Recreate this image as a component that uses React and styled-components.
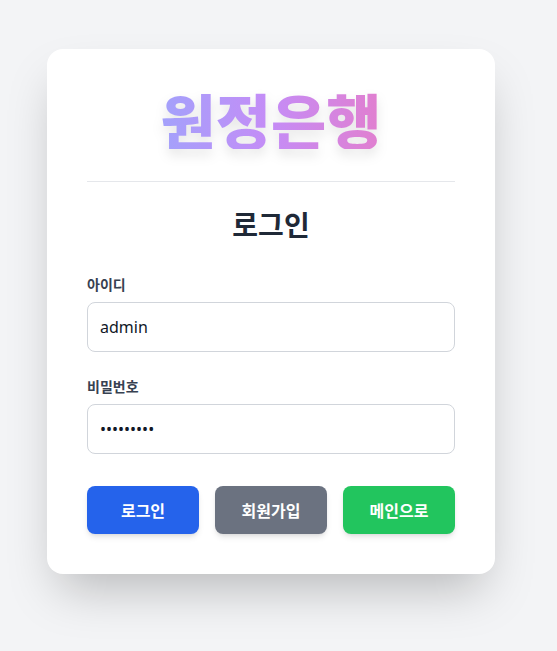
import React from "react";
import styled, { createGlobalStyle } from "styled-components";

const Global = createGlobalStyle`
  html, body { margin: 0; padding: 0; }
  body {
    background: #f3f4f6;
    font-family: "Noto Sans CJK KR", "Noto Sans", sans-serif;
  }
  * { box-sizing: border-box; }
`;

const Page = styled.div`
  min-height: 651px;
  display: flex;
  justify-content: center;
  align-items: flex-start;
  padding: 49px 15px 0 0;
`;

const Card = styled.div`
  width: 448px;
  background: #ffffff;
  border-radius: 16px;
  padding: 40px;
  box-shadow: 0 25px 50px -12px rgba(0, 0, 0, 0.25);
`;

const Brand = styled.div`
  padding-bottom: 31px;
  border-bottom: 1px solid #e5e7eb;
  text-align: center;
`;

const BrandText = styled.h1`
  margin: 0;
  font-size: 60px;
  line-height: 1;
  font-weight: 900;
  background: linear-gradient(90deg, #a3a1fb, #c58cf6 50%, #e17fcf);
  -webkit-background-clip: text;
  background-clip: text;
  color: transparent;
  display: inline-block;
  filter: drop-shadow(0 6px 6px rgba(0, 0, 0, 0.1));
`;

const Heading = styled.h2`
  margin: 24px 0 32px;
  text-align: center;
  font-size: 28px;
  line-height: 36px;
  font-weight: 700;
  color: #1f2937;
`;

const Field = styled.div`
  display: flex;
  flex-direction: column;
  gap: 8px;
  margin-bottom: ${(p) => (p.$last ? "32px" : "24px")};
`;

const Label = styled.label`
  font-size: 14px;
  line-height: 20px;
  font-weight: 700;
  color: #374151;
`;

const Input = styled.input`
  width: 100%;
  height: 50px;
  padding: 12px;
  border: 1px solid #d1d5db;
  border-radius: 8px;
  font-family: "Noto Sans", "Noto Sans CJK KR", sans-serif;
  font-size: 16px;
  color: #111827;
  outline: none;
  background: #fff;
`;

const Buttons = styled.div`
  display: grid;
  grid-template-columns: repeat(3, 1fr);
  gap: 16px;
`;

const Button = styled.button`
  height: 48px;
  border: none;
  border-radius: 8px;
  background: ${(p) => p.$bg};
  color: #ffffff;
  font-family: "Noto Sans CJK KR", sans-serif;
  font-size: 16px;
  font-weight: 700;
  box-shadow: 0 4px 6px -1px rgba(0, 0, 0, 0.1), 0 2px 4px -2px rgba(0, 0, 0, 0.1);
  cursor: pointer;
`;

export default function App() {
  return (
    <>
      <Global />
      <Page>
        <Card>
          <Brand>
            <BrandText>원정은행</BrandText>
          </Brand>
          <Heading>로그인</Heading>
          <Field>
            <Label>아이디</Label>
            <Input type="text" defaultValue="admin" />
          </Field>
          <Field $last>
            <Label>비밀번호</Label>
            <Input type="password" defaultValue="123456789" />
          </Field>
          <Buttons>
            <Button $bg="#2563eb">로그인</Button>
            <Button $bg="#6b7280">회원가입</Button>
            <Button $bg="#22c55e">메인으로</Button>
          </Buttons>
        </Card>
      </Page>
    </>
  );
}
